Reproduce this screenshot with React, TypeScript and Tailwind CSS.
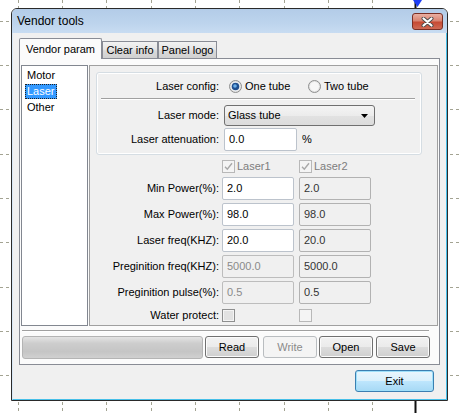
import React from 'react';

// dashed canvas grid behind the dialog
const GRID = [18, 62, 106, 151, 195, 239, 284, 328, 372];

const Backdrop = () => (
  <svg className="absolute inset-0" width={460} height={413}>
    {GRID.map((x) => (
      <line key={'v' + x} x1={x + 0.5} y1={0} x2={x + 0.5} y2={413} stroke="#a3a392" strokeDasharray="3 3" />
    ))}
    {[21, 65, 109, 154, 198, 242, 287, 331, 375].map((y) => (
      <line key={'h' + y} x1={0} y1={y + 0.5} x2={460} y2={y + 0.5} stroke="#a3a392" strokeDasharray="3 3" />
    ))}
    <line x1={415.5} y1={0} x2={415.5} y2={413} stroke="#111" strokeWidth={2} />
    <polygon points="413,0 422,0 417.5,7" fill="#1d3df5" />
  </svg>
);

const Radio = ({ checked }: { checked?: boolean }) => (
  <svg width="13" height="13" viewBox="0 0 13 13" className="shrink-0">
    <circle cx="6.5" cy="6.5" r="6" fill="#e4e4e4" stroke="#8e8f8f" />
    <circle cx="6.5" cy="6.5" r="4.5" fill="#f7f7f7" />
    {checked && (
      <>
        <circle cx="6.5" cy="6.5" r="3.8" fill="#1f4f8f" />
        <circle cx="6" cy="6" r="1.8" fill="#6aaee8" />
      </>
    )}
  </svg>
);

const Check = ({ checked, disabled }: { checked?: boolean; disabled?: boolean }) => (
  <svg width="13" height="13" viewBox="0 0 13 13" className="shrink-0">
    <rect x="0.5" y="0.5" width="12" height="12" fill="#f4f4f4" stroke={disabled ? '#b8b8b8' : '#8e8f8f'} />
    {!disabled && <rect x="2" y="2" width="9" height="9" fill="#e2e2e2" />}
    {checked && <path d="M3 6.8 L5.3 9.2 L10 3.3" fill="none" stroke="#a8a8a8" strokeWidth="1.4" />}
  </svg>
);

const TextBox = ({ value, kind = 'edit', w = 'w-[72px]' }: { value: string; kind?: 'edit' | 'read' | 'off'; w?: string }) => {
  const look =
    kind === 'edit'
      ? 'bg-white border-[#bcc3cc] text-black'
      : kind === 'read'
      ? 'bg-[#f0f0f0] border-[#b2b2b2] text-[#333]'
      : 'bg-[#f0f0f0] border-[#bdbdbd] text-[#8a8a8a]';
  return (
    <div className={`${w} h-[23px] shrink-0 flex items-center pl-[4px] pb-px rounded-[2px] border ${look}`}>
      {value}
    </div>
  );
};

const Button = ({ label, kind = 'normal' }: { label: string; kind?: 'normal' | 'off' }) => (
  <div
    className={
      kind === 'off'
        ? 'w-[54px] h-[22px] shrink-0 flex items-center justify-center rounded-[3px] border border-[#b9bdc0] bg-[#f4f4f4] text-[#8a8a8a]'
        : 'w-[54px] h-[22px] shrink-0 flex items-center justify-center rounded-[3px] border border-[#707070] bg-[linear-gradient(to_bottom,#f2f2f2_0%,#ebebeb_50%,#dddddd_50%,#cfcfcf_100%)] shadow-[inset_0_0_0_1px_#fbfbfb]'
    }
  >
    {label}
  </div>
);

const rows: { label: string; a: string; b: string; aKind: 'edit' | 'off' }[] = [
  { label: 'Min Power(%):', a: '2.0', b: '2.0', aKind: 'edit' },
  { label: 'Max Power(%):', a: '98.0', b: '98.0', aKind: 'edit' },
  { label: 'Laser freq(KHZ):', a: '20.0', b: '20.0', aKind: 'edit' },
  { label: 'Preginition freq(KHZ):', a: '5000.0', b: '5000.0', aKind: 'off' },
  { label: 'Preginition pulse(%):', a: '0.5', b: '0.5', aKind: 'off' },
];

export default function App() {
  return (
    <div className="relative w-[460px] h-[413px] overflow-hidden bg-white font-['Liberation_Sans',Arial,sans-serif] text-[11px] text-black leading-none">
      <Backdrop />

      <div className="absolute left-[11px] top-[8px] w-[437px] h-[393px] flex flex-col overflow-hidden rounded-t-[6px] border border-[#2a2a2a] bg-[#f0f0f0]">
        {/* title bar */}
        <div className="h-[24px] shrink-0 flex items-start justify-between bg-[linear-gradient(to_bottom,#b3cce8,#bdd4ed_60%,#c8dcf2)]">
          <span className="pl-[5px] h-[24px] flex items-center text-[12px]">Vendor tools</span>
          <div className="mt-[4px] mr-[4px] w-[31px] h-[17px] flex items-center justify-center rounded-[3px] border border-[#7a2f25] bg-[linear-gradient(to_bottom,#eab0a2_0%,#d98472_45%,#c64a34_55%,#cf6a55_100%)]">
            <svg width="13" height="10" viewBox="0 0 13 10">
              <path d="M2.5 1.5 L10.5 8.5 M10.5 1.5 L2.5 8.5" stroke="#4a4a4a" strokeWidth="4" strokeLinecap="round" />
              <path d="M2.5 1.5 L10.5 8.5 M10.5 1.5 L2.5 8.5" stroke="#ffffff" strokeWidth="2.2" strokeLinecap="round" />
            </svg>
          </div>
        </div>

        {/* client area */}
        <div className="flex-1 flex flex-col border-l border-r border-b border-l-[#d8e7f5] border-r-[#47bfe8] border-b-[#47bfe8]">
          {/* tabs */}
          <div className="flex items-end pl-[6px] pt-[5px]">
            <div className="relative z-10 -mb-px w-[83px] h-[21px] flex items-center justify-center border border-b-0 border-[#898c95] bg-[#fbfbfb] rounded-t-[2px]">
              Vendor param
            </div>
            <div className="w-[56px] h-[17px] flex items-center justify-center pt-px border border-b-0 border-[#898c95] bg-[linear-gradient(to_bottom,#f2f2f2,#e6e6e6_45%,#dadada_55%,#d0d0d0)]">
              Clear info
            </div>
            <div className="w-[59px] h-[17px] flex items-center justify-center pt-px border border-b-0 border-[#898c95] bg-[linear-gradient(to_bottom,#f2f2f2,#e6e6e6_45%,#dadada_55%,#d0d0d0)]">
              Panel logo
            </div>
          </div>

          {/* tab page */}
          <div className="mx-[6px] h-[307px] shrink-0 flex flex-col border border-[#898c95] bg-[#fbfbfb]">
            <div className="flex gap-px pt-[6px] pl-px">
              {/* list */}
              <div className="w-[67px] h-[261px] shrink-0 flex flex-col pt-px border border-[#828790] bg-white">
                <div className="h-[16px] flex items-center pl-[5px]">Motor</div>
                <div className="h-[16px] flex items-center pl-[3px]">
                  <span className="h-[15px] flex items-center px-[1px] border border-dotted border-[#222] bg-[#3399ff] text-white">Laser</span>
                </div>
                <div className="h-[16px] flex items-center pl-[5px]">Other</div>
              </div>

              {/* settings */}
              <div className="w-[349px] h-[261px] shrink-0 flex flex-col border border-[#a0a0a0] bg-[#f0f0f0]">
                <div className="ml-[6px] mt-[6px] w-[326px] h-[83px] shrink-0 flex flex-col rounded-[3px] border border-[#d5dde3] shadow-[inset_0_0_0_1px_#ffffff]">
                  <div className="mt-[4px] h-[18px] flex items-center">
                    <span className="w-[122px] text-right">Laser config:</span>
                    <div className="ml-[10px] w-[79px] flex items-center">
                      <Radio checked />
                      <span className="ml-[3px]">One tube</span>
                    </div>
                    <div className="flex items-center">
                      <Radio />
                      <span className="ml-[3px]">Two tube</span>
                    </div>
                  </div>
                  <div className="mt-[3px] ml-[4px] w-[314px] h-[2px] border-t border-t-[#a0a0a0] border-b border-b-white" />
                  <div className="mt-[5px] flex items-center">
                    <span className="w-[122px] text-right">Laser mode:</span>
                    <div className="ml-[5px] w-[151px] h-[21px] flex items-center justify-between pl-[3px] pr-[6px] rounded-[3px] border border-[#707070] bg-[linear-gradient(to_bottom,#f4f4f4,#ececec_50%,#e2e2e2_50%,#dcdcdc)]">
                      <span>Glass tube</span>
                      <svg width="7" height="4" viewBox="0 0 7 4">
                        <polygon points="0,0 7,0 3.5,4" fill="#000" />
                      </svg>
                    </div>
                  </div>
                  <div className="mt-[2px] flex items-center">
                    <span className="w-[122px] text-right">Laser attenuation:</span>
                    <div className="ml-[5px]">
                      <TextBox value="0.0" w="w-[73px]" />
                    </div>
                    <span className="ml-[5px]">%</span>
                  </div>
                </div>

                <div className="mt-[5px] h-[13px] flex items-center pl-[132px] text-[#7d7d7d]">
                  <div className="w-[77px] flex items-center">
                    <Check checked disabled />
                    <span className="ml-[2px]">Laser1</span>
                  </div>
                  <div className="flex items-center">
                    <Check checked disabled />
                    <span className="ml-[2px]">Laser2</span>
                  </div>
                </div>

                <div className="mt-[4px] flex flex-col gap-[3px]">
                  {rows.map((r) => (
                    <div key={r.label} className="flex items-center">
                      <span className="w-[129px] text-right">{r.label}</span>
                      <div className="ml-[3px]">
                        <TextBox value={r.a} kind={r.aKind} />
                      </div>
                      <div className="ml-[5px]">
                        <TextBox value={r.b} kind="read" />
                      </div>
                    </div>
                  ))}
                </div>

                <div className="mt-[5px] h-[13px] flex items-center">
                  <span className="w-[129px] text-right">Water protect:</span>
                  <div className="ml-[3px] w-[77px]">
                    <Check />
                  </div>
                  <Check disabled />
                </div>
              </div>
            </div>

            <div className="mt-[4px] ml-[2px] w-[407px] h-[2px] border-t border-t-[#a0a0a0] border-b border-b-white" />

            <div className="mt-[4px] ml-[2px] flex items-start">
              <div className="w-[181px] h-[23px] shrink-0 rounded-[3px] border border-[#b4b4b4] bg-[linear-gradient(to_bottom,#e4e4e4,#cdcdcd_30%,#c5c5c5_70%,#d0d0d0)]" />
              <div className="ml-[2px]"><Button label="Read" /></div>
              <div className="ml-[4px]"><Button label="Write" kind="off" /></div>
              <div className="ml-[2px]"><Button label="Open" /></div>
              <div className="ml-[3px]"><Button label="Save" /></div>
            </div>
          </div>

          <div className="mt-[5px] pr-[12px] flex justify-end">
            <div className="w-[79px] h-[22px] flex items-center justify-center rounded-[3px] border border-[#3c7fb1] bg-[linear-gradient(to_bottom,#eaf6fd_0%,#d9f0fc_50%,#bee6fd_50%,#a7d9f5_100%)] shadow-[inset_0_0_0_1px_#9fe0fa]">
              Exit
            </div>
          </div>
        </div>
      </div>
    </div>
  );
}
